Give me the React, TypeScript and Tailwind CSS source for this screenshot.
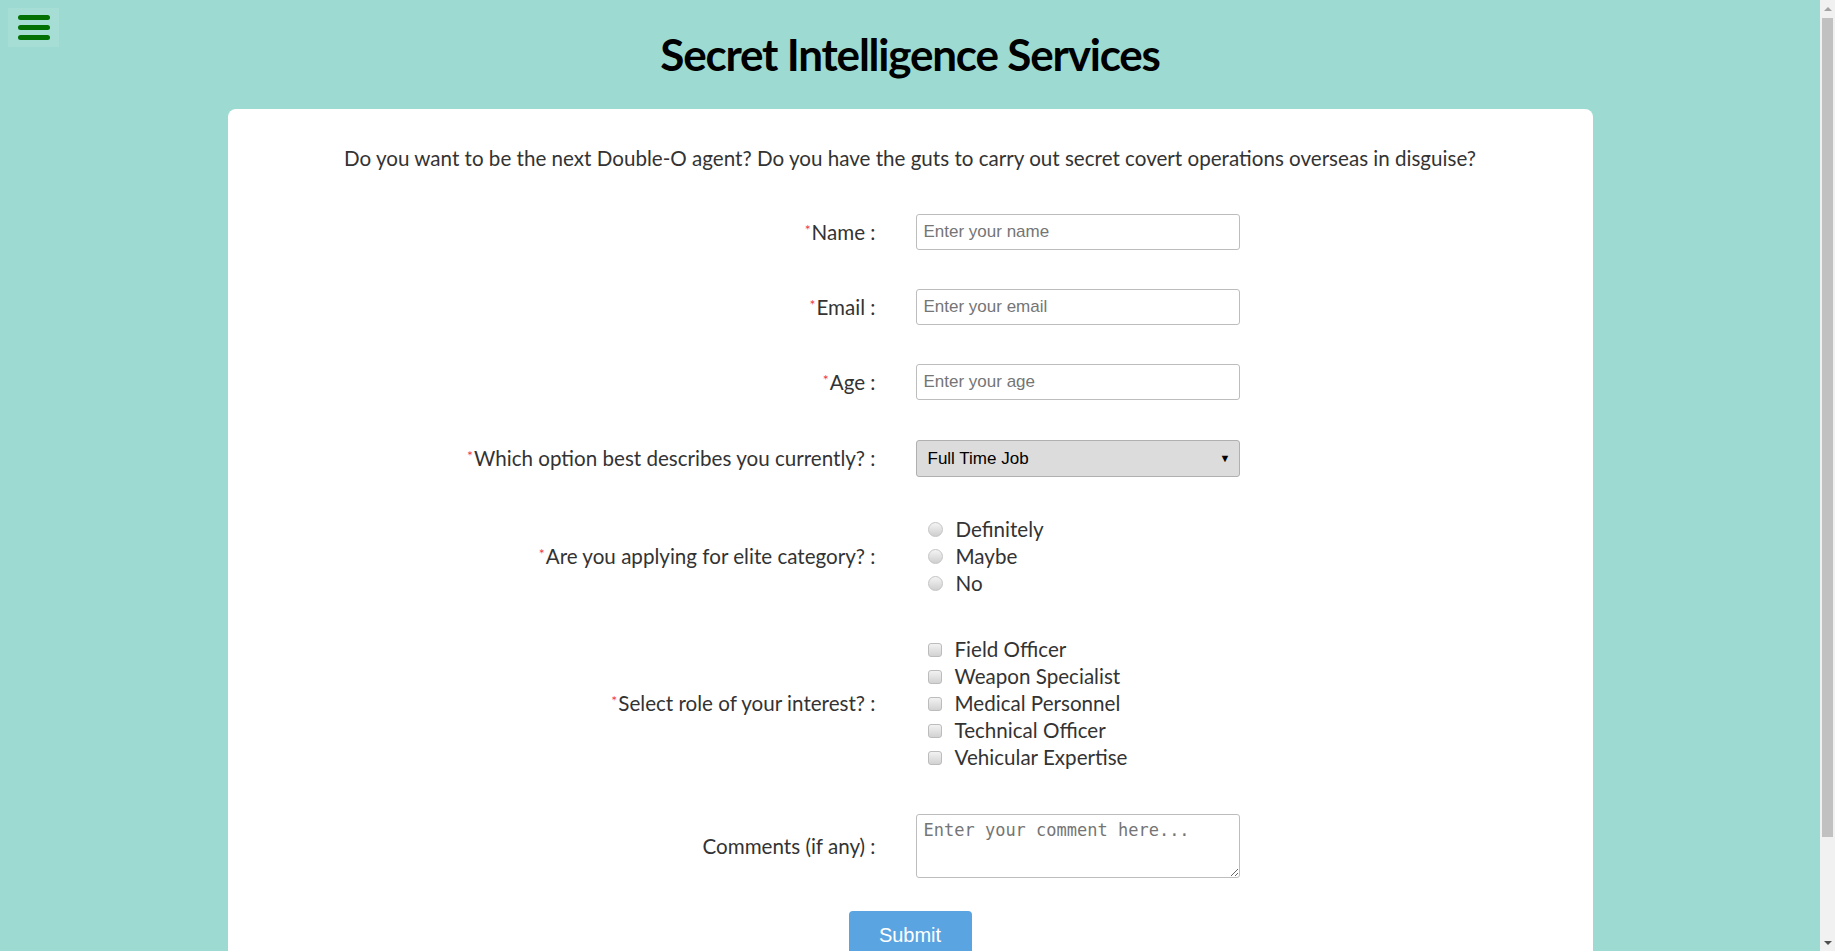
import React, { useState } from 'react';

const labelFont = { fontFamily: 'Lato, "Open Sans", sans-serif' };
const arial = { fontFamily: '"Liberation Sans", Arial, sans-serif' };

const Req: React.FC = () => (
  <span className="relative top-[-5px] text-[#f03c3c] text-[14px] leading-none mr-[1px]">*</span>
);

const roles = [
  'Field Officer',
  'Weapon Specialist',
  'Medical Personnel',
  'Technical Officer',
  'Vehicular Expertise',
];

const eliteOptions = ['Definitely', 'Maybe', 'No'];

const App: React.FC = () => {
  const [elite, setElite] = useState('');
  const [picked, setPicked] = useState<string[]>([]);

  const toggleRole = (role: string) => {
    setPicked(picked.includes(role) ? picked.filter((r) => r !== role) : [...picked, role]);
  };

  const inputClass =
    'w-[324px] h-[36px] border border-[#bdbdbd] rounded-[3px] px-[7px] text-[17px] text-[#222] placeholder:text-[#757575] bg-white outline-none';

  return (
    <div className="flex h-[951px] overflow-hidden">
      <div className="flex-1 h-full overflow-hidden">
        <div className="bg-[#9ddad1] pb-[72px]">
          {/* Header */}
          <header className="relative h-[109px] flex items-start justify-center pt-[28px]">
            <button className="absolute left-[8px] top-[8px] w-[51px] h-[39px] bg-[#a6ddd5] flex flex-col items-center justify-center gap-[5px]">
              <span className="block w-[32px] h-[5px] rounded-full bg-[#037003]" />
              <span className="block w-[32px] h-[5px] rounded-full bg-[#037003]" />
              <span className="block w-[32px] h-[5px] rounded-full bg-[#037003]" />
            </button>
            <h1
              className="text-[44px] font-bold text-black leading-[52px] tracking-[-1.2px]"
              style={labelFont}
            >
              Secret Intelligence Services
            </h1>
          </header>

          {/* Form card */}
          <main className="mx-auto w-[75%] bg-white rounded-lg pt-[36px] pb-[40px]" style={labelFont}>
            <p className="text-center text-[20.6px] leading-[26px] text-[#333]">
              Do you want to be the next Double-O agent? Do you have the guts to carry out secret covert operations overseas in disguise?
            </p>

            <form className="mt-[43px] grid grid-cols-[648px_324px] gap-x-[40px] gap-y-[39px] items-center text-[20.6px] text-[#333]">
              <label className="text-right">
                <Req />Name :
              </label>
              <input className={inputClass} placeholder="Enter your name" style={arial} />

              <label className="text-right">
                <Req />Email :
              </label>
              <input className={inputClass} placeholder="Enter your email" style={arial} />

              <label className="text-right">
                <Req />Age :
              </label>
              <input className={inputClass} placeholder="Enter your age" style={arial} />

              <label className="text-right">
                <Req />Which option best describes you currently? :
              </label>
              <div className="relative w-[324px] h-[37px] mt-[1px]">
                <select
                  className="appearance-none w-full h-full bg-[#dcdcdc] border border-[#b0b0b0] rounded-[3px] pl-[11px] text-[17px] text-black outline-none"
                  style={arial}
                  defaultValue="Full Time Job"
                >
                  <option>Full Time Job</option>
                  <option>Part Time Job</option>
                  <option>Student</option>
                  <option>Unemployed</option>
                </select>
                <span className="pointer-events-none absolute right-[9px] top-[12px] text-[11px] text-black leading-none">▼</span>
              </div>

              <label className="text-right">
                <Req />Are you applying for elite category? :
              </label>
              <div className="flex flex-col pl-[12px]">
                {eliteOptions.map((opt) => (
                  <label key={opt} className="flex items-center h-[27px] gap-[13px] cursor-pointer">
                    <input
                      type="radio"
                      name="elite"
                      checked={elite === opt}
                      onChange={() => setElite(opt)}
                      className="appearance-none w-[15px] h-[15px] rounded-full border border-[#c4c4c4] bg-linear-to-b from-[#f4f4f4] to-[#cfcfcf] checked:from-[#6aa8e0] checked:to-[#3f83c8]"
                    />
                    <span>{opt}</span>
                  </label>
                ))}
              </div>

              <label className="text-right">
                <Req />Select role of your interest? :
              </label>
              <div className="flex flex-col pl-[12px]">
                {roles.map((role) => (
                  <label key={role} className="flex items-center h-[27px] gap-[13px] cursor-pointer">
                    <input
                      type="checkbox"
                      checked={picked.includes(role)}
                      onChange={() => toggleRole(role)}
                      className="appearance-none w-[14px] h-[14px] rounded-[3px] border border-[#bcbcbc] bg-linear-to-b from-[#f2f2f2] to-[#d2d2d2] checked:from-[#6aa8e0] checked:to-[#3f83c8]"
                    />
                    <span>{role}</span>
                  </label>
                ))}
              </div>

              <label className="text-right mt-[4px]">Comments (if any) :</label>
              <textarea
                className="mt-[4px] w-[324px] h-[64px] border border-[#bdbdbd] rounded-[3px] px-[7px] py-[4px] text-[17px] leading-[22px] placeholder:text-[#757575] outline-none"
                style={{ fontFamily: '"DejaVu Sans Mono", "Liberation Mono", monospace' }}
                placeholder="Enter your comment here..."
              />
            </form>

            <div className="flex justify-center mt-[33px]">
              <button
                type="button"
                className="w-[123px] h-[48px] bg-[#5aa5e1] text-white text-[20px] rounded-[4px]"
                style={arial}
              >
                Submit
              </button>
            </div>
          </main>
        </div>
      </div>

      {/* Browser scrollbar */}
      <div className="w-[15px] h-full bg-[#f1f1f1] flex flex-col">
        <div className="h-[17px] flex items-center justify-center">
          <span className="block w-0 h-0 border-l-[4px] border-r-[4px] border-b-[4px] border-l-transparent border-r-transparent border-b-[#a3a3a3]" />
        </div>
        <div className="flex-1 px-[2px] pt-[1px]">
          <div className="h-[819px] bg-[#c1c1c1]" />
        </div>
        <div className="h-[17px] flex items-center justify-center">
          <span className="block w-0 h-0 border-l-[4px] border-r-[4px] border-t-[4px] border-l-transparent border-r-transparent border-t-[#505050]" />
        </div>
      </div>
    </div>
  );
};

export default App;
